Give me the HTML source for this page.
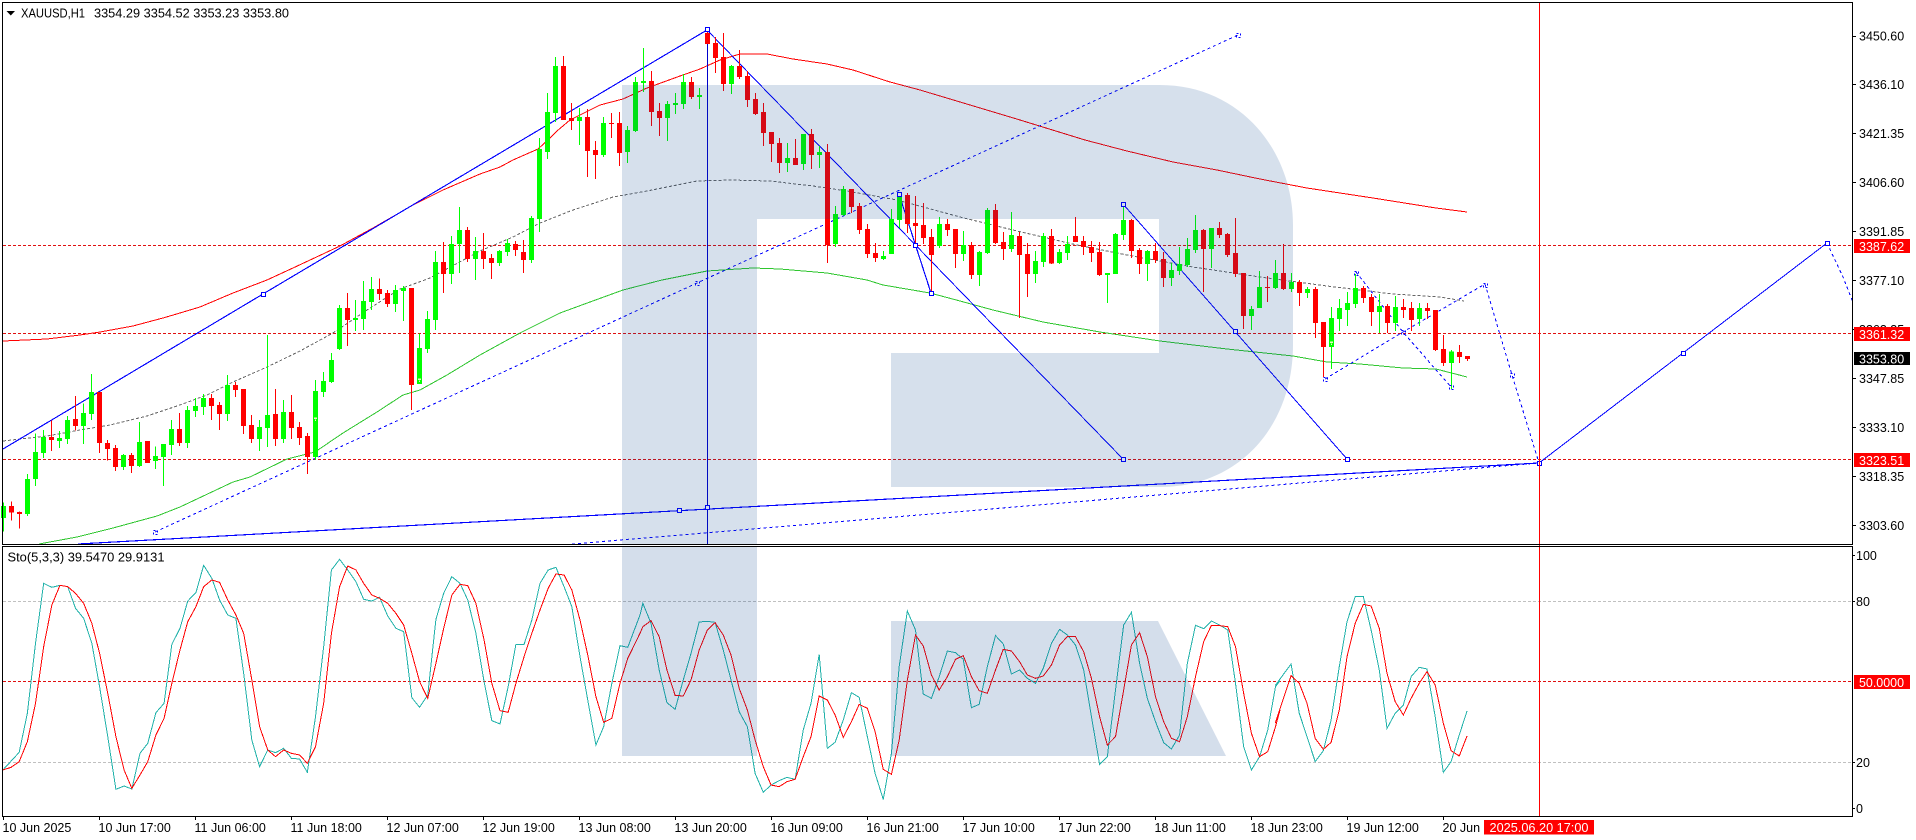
<!DOCTYPE html>
<html>
<head>
<meta charset="utf-8">
<title>XAUUSD,H1</title>
<style>
html,body{margin:0;padding:0;background:#fff;width:1916px;height:840px;overflow:hidden}
svg{position:absolute;left:0;top:0;display:block}
text{font-family:"Liberation Sans",sans-serif;font-size:12.5px;fill:#000}
.w{fill:#fff}
</style>
</head>
<body>
<svg width="1916" height="840" viewBox="0 0 1916 840" xmlns="http://www.w3.org/2000/svg">
<defs>
<clipPath id="m"><rect x="3" y="3" width="1849" height="541"/></clipPath>
<clipPath id="s"><rect x="3" y="547" width="1849" height="269"/></clipPath>
</defs>
<rect width="1916" height="840" fill="#fff"/>

<g clip-path="url(#m)" shape-rendering="crispEdges" fill="none">
<!-- horizontal levels -->
<path d="M3 245.5H1852M3 333.5H1852M3 459.5H1852" stroke="#e01010" stroke-dasharray="3 2"/>
<!-- gray MA -->
<polyline stroke="#666" stroke-dasharray="3 2" points="3,441 47,436 80,430 110,425 147,416 177,406 207,395 233,382 267,367 300,351 333,333 367,310 400,289 430,278 480,251 513,237 540,223 573,210 613,197 647,191 697,181 730,180 770,181 813,186 847,191 897,200 927,208 960,217 1017,231 1077,245 1127,255 1193,267 1260,277 1327,286 1393,294 1440,297 1464,301"/>
<!-- red MA -->
<polyline stroke="#f00" stroke-width="1" points="3,341 47,339 80,335 100,332 133,326 163,318 180,313 200,307 233,293 267,280 293,268 340,246 373,228 413,205 443,190 480,174 500,167 513,160 538,149 548,140 557,131 570,120 590,110 600,105 623,99 647,88 680,76 700,69 720,60 740,54 767,54 793,59 827,64 853,70 890,82 920,90 960,102 1020,120 1085,140 1127,151 1173,162 1217,170 1260,179 1307,188 1373,198 1436,208 1467,212"/>
<!-- green MA -->
<polyline stroke="#2fc62f" stroke-width="1" points="39,544 77,537 113,528 157,516 180,507 233,482 250,477 287,459 315,452 343,433 377,412 403,395 420,390 447,375 480,355 520,333 560,313 590,302 623,290 662,280 707,271 753,268 780,269 827,273 867,280 883,285 930,293 960,301 993,310 1043,322 1100,332 1160,341 1227,349 1293,356 1327,362 1360,364 1403,368 1436,369 1467,377"/>

<!-- blue solid lines -->
<path d="M3 449L263 294L707 30" stroke="#00f" stroke-width="1.15"/>
<path d="M707 30L1123 459" stroke="#00f"/>
<path d="M1123 204L1347 459" stroke="#00f"/>
<path d="M899 194L931 293" stroke="#00f" stroke-width="1.15"/>
<path d="M707.5 30V544" stroke="#00c" stroke-width="1"/>
<path d="M78 544L1539 463" stroke="#00f" stroke-width="1.15"/>
<path d="M1539 463L1683 353L1827 243" stroke="#00f"/>
<!-- blue dashed lines -->
<g stroke="#00f" stroke-dasharray="3 3">
<path d="M155 532L697 283L1238 35"/>
<path d="M572 544L1539 463"/>
<path d="M1325 379L1403 332L1485 284L1512 375L1539 463"/>
<path d="M1356 272L1403 332L1451 387"/>
<path d="M1827 243L1843 277L1856 310"/>
</g>
</g>

<!-- CANDLES: section 1 -->
<g transform="translate(.5,280) scale(.33333)" fill="none" shape-rendering="crispEdges">
<path stroke="#0f0" stroke-width="3" d="M9 668V755M81 582V708M105 460V618M129 450V534M177 453V504M201 408V492M249 370V492M273 282V420M369 522V570M417 426V561M465 500V567M489 492V618M513 420V525M561 378V504M585 354V411M609 342V405M681 285V423M777 420V513M801 165V501M849 360V489M945 300V540M969 276V351M993 219V309M1017 75V210M1065 60V153M1089 3V150M1113 -9V90M1185 15V96M1209 18V123M1257 160V312M1281 93V219"/>
<path stroke="#0f0" stroke-width="15" d="M9 678V714M81 597V702M105 516V597M129 471V519M177 474V483M201 420V477M249 399V438M273 336V402M369 525V561M417 486V558M465 528V543M489 492V531M513 447V495M561 390V489M585 378V393M609 354V381M681 315V402M777 441V477M801 405V444M849 396V477M945 333V531M969 303V336M993 240V306M1017 84V207M1065 114V120M1089 63V117M1113 27V66M1185 30V72M1209 24V33M1257 204V312M1281 117V207"/>
<path stroke="#f00" stroke-width="3" d="M33 665V722M57 694V746M153 422V513M225 348V452M297 336V519M321 480V542M345 495V573M393 519V579M441 483V549M537 399V498M633 342V420M657 366V450M705 306V351M729 327V462M753 405V489M825 327V498M873 345V477M897 426V495M921 459V582M1041 39V198M1137 -5V60M1161 30V81M1233 24V390"/>
<path stroke="#f00" stroke-width="15" d="M33 678V698M57 696V702M153 471V480M225 417V438M297 336V489M321 489V507M345 504V561M393 525V558M441 483V549M537 447V489M633 354V378M657 375V402M705 315V330M729 327V438M753 435V477M825 402V477M873 396V444M897 441V474M921 468V531M1041 84V120M1137 27V42M1161 39V72M1233 24V315"/>
</g>
<!-- section 1b -->
<g transform="translate(.5,0) scale(.33333)" fill="none" shape-rendering="crispEdges">
<path stroke="#0f0" stroke-width="3" d="M1305 753V990M1353 708V852M1377 621V819M1425 711V840"/>
<path stroke="#0f0" stroke-width="15" d="M1305 786V960M1353 732V822M1377 690V732M1425 753V777"/>
<path stroke="#f00" stroke-width="3" d="M1329 726V879M1401 681V786"/>
<path stroke="#f00" stroke-width="15" d="M1329 786V822M1401 690V777"/>
</g>
<!-- section 2 -->
<g transform="translate(480.5,0) scale(.33333)" fill="none" shape-rendering="crispEdges">
<path stroke="#0f0" stroke-width="3" d="M57 750V798M81 717V768M153 648V789M177 414V696M201 279V477M225 171V366M297 324V435M369 351V471M441 378V489M465 231V396M489 144V276M561 303V423M585 279V342M609 222V327M657 264V327M753 195V282M921 429V516M969 402V510M1017 438V504M1065 618V741M1089 558V648M1209 753V780M1233 627V762M1257 576V684M1377 651V744"/>
<path stroke="#0f0" stroke-width="15" d="M57 753V789M81 729V756M153 654V780M177 447V657M201 336V456M225 198V339M297 351V363M369 369V465M441 390V456M465 246V393M489 243V249M561 312V354M585 309V315M609 246V312M657 285V291M753 198V252M921 474V489M969 402V492M1017 456V465M1065 642V732M1089 567V645M1209 768V777M1233 657V762M1257 591V660M1377 672V738"/>
<path stroke="#f00" stroke-width="3" d="M9 699V807M33 762V837M105 723V768M129 720V819M249 168V360M273 309V390M321 327V531M345 423V537M393 339V414M417 336V498M513 213V378M537 309V408M633 231V297M681 90V132M705 111V219M729 99V273M777 150V237M801 213V321M825 279V345M849 309V438M873 396V486M897 414V519M945 417V495M993 387V507M1041 432V789M1113 567V639M1137 609V702M1161 672V774M1185 729V786M1281 579V699M1305 588V732M1329 609V732M1353 687V879M1401 657V708M1425 687V804"/>
<path stroke="#f00" stroke-width="15" d="M9 753V777M33 774V789M105 732V750M129 756V780M249 198V360M273 354V363M321 351V453M345 450V465M393 369V372M417 369V459M513 243V336M537 333V354M633 246V291M681 99V132M705 129V174M729 171V252M777 198V231M801 228V300M825 297V342M849 336V399M873 396V432M897 429V489M945 474V495M993 402V465M1041 456V735M1113 567V621M1137 618V690M1161 687V762M1185 759V774M1281 585V672M1305 669V678M1329 675V714M1353 711V765M1401 672V690M1425 687V762"/>
</g>
<!-- section 3 -->
<g transform="translate(960.5,140) scale(.33333)" fill="none" shape-rendering="crispEdges">
<path stroke="#0f0" stroke-width="3" d="M9 273V363M57 333V438M81 204V342M153 216V336M225 333V429M249 279V381M297 327V372M321 288V360M441 399V489M465 279V402M489 192V300M561 330V423M633 369V438M657 321V405M681 294V381M705 225V339M753 264V384M873 498V570M897 393V504M945 360V447M993 399V456M1041 441V474M1113 501V687M1137 477V573M1161 456V558M1185 402V504M1257 462V579M1305 468V573M1377 489V558"/>
<path stroke="#0f0" stroke-width="15" d="M9 315V342M57 336V405M81 210V339M153 285V327M225 363V402M249 288V366M297 336V369M321 312V339M441 399V405M465 282V402M489 240V285M561 333V372M633 390V414M657 372V393M681 327V375M705 270V330M753 264V327M873 507V528M897 441V504M945 399V444M993 426V447M1041 447V459M1113 534V621M1137 504V537M1161 489V510M1185 444V492M1257 498V516M1305 501V549M1377 504V537"/>
<path stroke="#f00" stroke-width="3" d="M33 306V417M105 192V312M129 276V360M177 276V534M201 309V471M273 267V372M345 231V306M369 288V345M393 303V366M417 306V408M513 237V354M537 324V402M585 309V369M609 336V441M729 267V456M777 246V294M801 279V351M825 234V411M849 399V567M921 408V486M969 312V450M1017 420V498M1065 441V594M1089 546V711M1209 438V489M1233 462V558M1281 492V579M1329 477V534M1353 486V573M1401 489V537M1425 510V633"/>
<path stroke="#f00" stroke-width="15" d="M33 315V405M105 210V309M129 306V327M177 288V345M201 342V402M273 288V370M345 288V306M369 303V321M393 321V339M417 336V405M513 240V333M537 330V372M585 333V360M609 357V414M729 270V327M777 264V285M801 282V345M825 339V402M849 399V528M921 441V444M969 399V447M1017 426V459M1065 447V549M1089 546V621M1209 444V474M1233 471V516M1281 498V549M1329 501V510M1353 504V540M1401 504V513M1425 510V630"/>
</g>
<!-- section 4 -->
<g transform="translate(1436.5,280) scale(.33333)" fill="none" shape-rendering="crispEdges">
<path stroke="#0f0" stroke-width="3" d="M45 210V327"/>
<path stroke="#0f0" stroke-width="15" d="M45 215V249"/>
<path stroke="#f00" stroke-width="3" d="M21 165V258M69 195V249M93 228V243"/>
<path stroke="#f00" stroke-width="15" d="M21 207V249M69 216V231M93 228V237"/>
</g>
<path d="M314 418h3M315 420h1M418 379h3M419 381h1M1330 342h3M1331 344h1" stroke="#e8f8c0" stroke-width="1.5" fill="none" shape-rendering="crispEdges"/>

<!-- solid markers -->
<g fill="#fff" stroke="#00f" stroke-width="1" shape-rendering="crispEdges">
<rect x="705.5" y="27.5" width="4" height="4"/>
<rect x="261.5" y="292.5" width="4" height="4"/>
<rect x="897.5" y="192.5" width="4" height="4"/>
<rect x="913.5" y="243.5" width="4" height="4"/>
<rect x="929.5" y="291.5" width="4" height="4"/>
<rect x="1121.5" y="202.5" width="4" height="4"/>
<rect x="1233.5" y="329.5" width="4" height="4"/>
<rect x="1121.5" y="457.5" width="4" height="4"/>
<rect x="1345.5" y="457.5" width="4" height="4"/>
<rect x="677.5" y="508.5" width="4" height="4"/>
<rect x="705.5" y="505.5" width="4" height="4"/>
<rect x="1537.5" y="461.5" width="4" height="4"/>
<rect x="1681.5" y="351.5" width="4" height="4"/>
<rect x="1825.5" y="241.5" width="4" height="4"/>
</g>
<!-- dashed markers -->
<g fill="none" stroke="#00f" stroke-width="1" stroke-dasharray="2 2" shape-rendering="crispEdges">
<rect x="153.5" y="530.5" width="4" height="4"/>
<rect x="695.5" y="281.5" width="4" height="4"/>
<rect x="1236.5" y="33.5" width="4" height="4"/>
<rect x="1323.5" y="377.5" width="4" height="4"/>
<rect x="1354.5" y="271.5" width="4" height="4"/>
<rect x="1401.5" y="330.5" width="4" height="4"/>
<rect x="1449.5" y="385.5" width="4" height="4"/>
<rect x="1483.5" y="283.5" width="4" height="4"/>
<rect x="1510.5" y="373.5" width="4" height="4"/>
</g>

<!-- sub window -->
<g clip-path="url(#s)" shape-rendering="crispEdges" fill="none">
<path d="M3 601.5H1852M3 762.5H1852" stroke="#c0c0c0" stroke-dasharray="3 2"/>
<path d="M3 681.5H1852" stroke="#e01010" stroke-dasharray="3 2"/>
<g transform="translate(0,540) scale(.40816,.33333)">
<polyline vector-effect="non-scaling-stroke" stroke="#20b2aa" points="7,690 47,637 67,520 87,310 107,130 127,142 147,136 166,140 185,205 205,235 225,310 244,440 264,590 284,748 304,738 323,747 343,640 362,610 382,518 402,490 421,313 441,265 460,183 480,158 499,76 519,115 538,180 558,225 578,235 597,400 617,600 636,680 656,630 675,638 695,625 714,655 734,657 753,697 773,530 793,320 812,90 832,58 852,90 872,125 891,178 911,183 930,172 950,228 970,265 989,275 1009,473 1028,502 1048,465 1068,238 1087,160 1107,110 1127,130 1146,180 1166,280 1186,425 1205,542 1225,552 1245,440 1264,313 1284,313 1303,240 1323,130 1343,90 1362,82 1382,140 1401,200 1421,350 1440,480 1460,615 1479,560 1499,430 1519,317 1538,322 1568,225"/>
<polyline vector-effect="non-scaling-stroke" stroke="#f00" points="7,690 27,682 47,665 67,605 87,490 107,320 127,195 147,136 166,140 185,160 205,190 225,250 244,340 264,460 284,590 304,690 323,745 343,705 362,665 382,585 402,535 421,430 441,330 460,245 480,200 499,140 519,120 538,127 558,180 578,225 597,280 617,420 636,560 656,630 675,650 695,630 714,640 734,645 753,670 773,620 793,490 812,280 832,140 852,78 872,90 891,130 911,165 930,175 950,190 970,220 989,255 1009,340 1028,425 1048,475 1068,370 1087,265 1107,165 1127,133 1146,137 1166,190 1186,300 1205,430 1225,512 1245,517 1264,430 1284,350 1303,280 1323,210 1343,145 1362,102 1382,105 1401,150 1421,240 1440,345 1460,470 1479,547 1499,535 1519,430 1538,355 1568,280"/>
</g>
<g transform="translate(640,540) scale(.40816,.33333)">
<polyline vector-effect="non-scaling-stroke" stroke="#20b2aa" points="0,225 7,190 27,250 47,390 66,488 86,508 106,420 125,340 145,246 165,244 184,247 204,330 223,420 243,515 263,560 282,700 302,757 321,735 341,722 360,712 380,718 400,570 419,490 439,343 459,625 478,607 498,540 518,458 537,472 557,590 576,700 596,778 616,640 635,380 655,213 675,270 694,462 714,475 733,410 753,333 773,338 792,358 812,503 831,493 851,380 871,287 890,312 910,402 930,390 949,415 969,430 988,385 1008,310 1028,268 1047,285 1067,315 1087,390 1106,530 1126,673 1145,650 1165,450 1185,255 1204,217 1224,370 1243,475 1263,545 1283,608 1302,627 1322,585 1341,370 1361,256 1381,266 1400,243 1420,255 1440,270 1459,430 1479,620 1498,690 1518,650 1538,570 1557,440 1568,422"/>
<polyline vector-effect="non-scaling-stroke" stroke="#f00" points="0,280 7,260 27,242 47,290 66,390 86,466 106,468 125,420 145,330 165,270 184,248 204,285 223,345 243,445 263,510 282,600 302,680 321,735 341,740 360,725 380,718 400,650 419,590 439,468 459,480 478,525 498,592 518,545 537,493 557,505 576,575 596,688 616,703 635,600 655,420 675,285 694,318 714,405 733,450 753,410 773,358 792,347 812,410 831,452 851,460 871,390 890,328 910,333 930,365 949,405 969,415 988,408 1008,375 1028,315 1047,290 1067,290 1087,335 1106,415 1126,530 1145,615 1165,590 1185,450 1204,315 1224,278 1243,350 1263,470 1283,545 1302,595 1322,605 1341,530 1361,410 1381,305 1400,256 1420,257 1440,260 1459,320 1479,460 1498,580 1518,650 1538,635 1557,560 1568,510"/>
</g>
<g transform="translate(1276,540) scale(.40816,.33333)">
<polyline vector-effect="non-scaling-stroke" stroke="#20b2aa" points="-2,437 17,405 37,372 57,520 76,590 96,665 116,632 135,540 155,380 174,245 194,170 214,170 233,270 253,390 272,565 292,520 312,495 331,410 351,382 370,387 390,530 410,697 429,665 449,585 468,513"/>
<polyline vector-effect="non-scaling-stroke" stroke="#f00" points="-2,550 17,480 37,407 57,430 76,490 96,595 116,628 135,607 155,510 174,350 194,250 214,193 233,198 253,265 272,400 292,485 312,525 331,475 351,430 370,395 390,435 410,550 429,632 449,648 468,588"/>
</g>
</g>

<!-- red vertical line -->
<path d="M1539.5 3V816" stroke="#f00" stroke-width="1" shape-rendering="crispEdges"/>

<!-- watermark overlay -->
<path fill="rgb(0,60,136)" fill-opacity=".16" d="M622 85H1160C1240 85 1293 150 1293 225V345C1293 425 1240 487 1160 487H891V353H1159V219H757V544H622Z"/>
<path fill="rgb(0,60,136)" fill-opacity=".17" d="M622 547H757V756H622Z"/>
<path fill="rgb(0,60,136)" fill-opacity=".17" d="M891 621H1158L1226 756H891Z"/>

<!-- frame -->
<g fill="none" stroke="#000" stroke-width="1" shape-rendering="crispEdges">
<path d="M2.5 2V544.5H1852.5V2M2 2.5H1853"/>
<path d="M2.5 546.5H1852.5V816.5H2.5Z"/>
<path d="M1853 36.5h3M1853 84.5h3M1853 133.5h3M1853 182.5h3M1853 231.5h3M1853 280.5h3M1853 329.5h3M1853 378.5h3M1853 427.5h3M1853 476.5h3M1853 525.5h3M1853 555.5h2M1853 601.5h2M1853 762.5h2M1853 808.5h2"/>
<path d="M3.5 817v3M99.5 817v3M195.5 817v3M291.5 817v3M387.5 817v3M483.5 817v3M579.5 817v3M675.5 817v3M771.5 817v3M867.5 817v3M963.5 817v3M1059.5 817v3M1155.5 817v3M1251.5 817v3M1347.5 817v3M1443.5 817v3"/>
</g>

<!-- header -->
<path d="M6.5 11H15L10.8 15.5Z" fill="#000"/>
<text x="21" y="17.5" textLength="64" lengthAdjust="spacingAndGlyphs">XAUUSD,H1</text>
<text x="94" y="17.5" textLength="195" lengthAdjust="spacingAndGlyphs">3354.29 3354.52 3353.23 3353.80</text>
<text x="7.5" y="561.5" textLength="157" lengthAdjust="spacingAndGlyphs">Sto(5,3,3) 39.5470 29.9131</text>

<!-- price axis labels -->
<g>
<text x="1859" y="40.5">3450.60</text>
<text x="1859" y="89">3436.10</text>
<text x="1859" y="138">3421.35</text>
<text x="1859" y="187">3406.60</text>
<text x="1859" y="236">3391.85</text>
<text x="1859" y="285">3377.10</text>
<text x="1859" y="334">3362.35</text>
<text x="1859" y="383">3347.85</text>
<text x="1859" y="432">3333.10</text>
<text x="1859" y="481">3318.35</text>
<text x="1859" y="530">3303.60</text>
</g>
<rect x="1854" y="239" width="56" height="14" fill="#f00"/>
<text class="w" x="1859" y="251">3387.62</text>
<rect x="1854" y="327" width="56" height="14" fill="#f00"/>
<text class="w" x="1859" y="339">3361.32</text>
<rect x="1854" y="352" width="56" height="13" fill="#000"/>
<text class="w" x="1859" y="363.5">3353.80</text>
<rect x="1854" y="453" width="56" height="14" fill="#f00"/>
<text class="w" x="1859" y="465">3323.51</text>

<!-- stochastic axis labels -->
<text x="1856" y="560">100</text>
<text x="1856" y="606">80</text>
<rect x="1854" y="675" width="56" height="14" fill="#f00"/>
<text class="w" x="1859" y="687" textLength="45" lengthAdjust="spacingAndGlyphs">50.0000</text>
<text x="1856" y="767">20</text>
<text x="1856" y="813">0</text>

<!-- time axis labels -->
<g>
<text x="2.5" y="832">10 Jun 2025</text>
<text x="98.5" y="832">10 Jun 17:00</text>
<text x="194.5" y="832">11 Jun 06:00</text>
<text x="290.5" y="832">11 Jun 18:00</text>
<text x="386.5" y="832">12 Jun 07:00</text>
<text x="482.5" y="832">12 Jun 19:00</text>
<text x="578.5" y="832">13 Jun 08:00</text>
<text x="674.5" y="832">13 Jun 20:00</text>
<text x="770.5" y="832">16 Jun 09:00</text>
<text x="866.5" y="832">16 Jun 21:00</text>
<text x="962.5" y="832">17 Jun 10:00</text>
<text x="1058.5" y="832">17 Jun 22:00</text>
<text x="1154.5" y="832">18 Jun 11:00</text>
<text x="1250.5" y="832">18 Jun 23:00</text>
<text x="1346.5" y="832">19 Jun 12:00</text>
<text x="1442.5" y="832">20 Jun 01:00</text>
</g>
<rect x="1484" y="820" width="110" height="14.5" fill="#f00"/>
<text class="w" x="1489.5" y="832" textLength="99" lengthAdjust="spacingAndGlyphs">2025.06.20 17:00</text>
</svg>
</body>
</html>
